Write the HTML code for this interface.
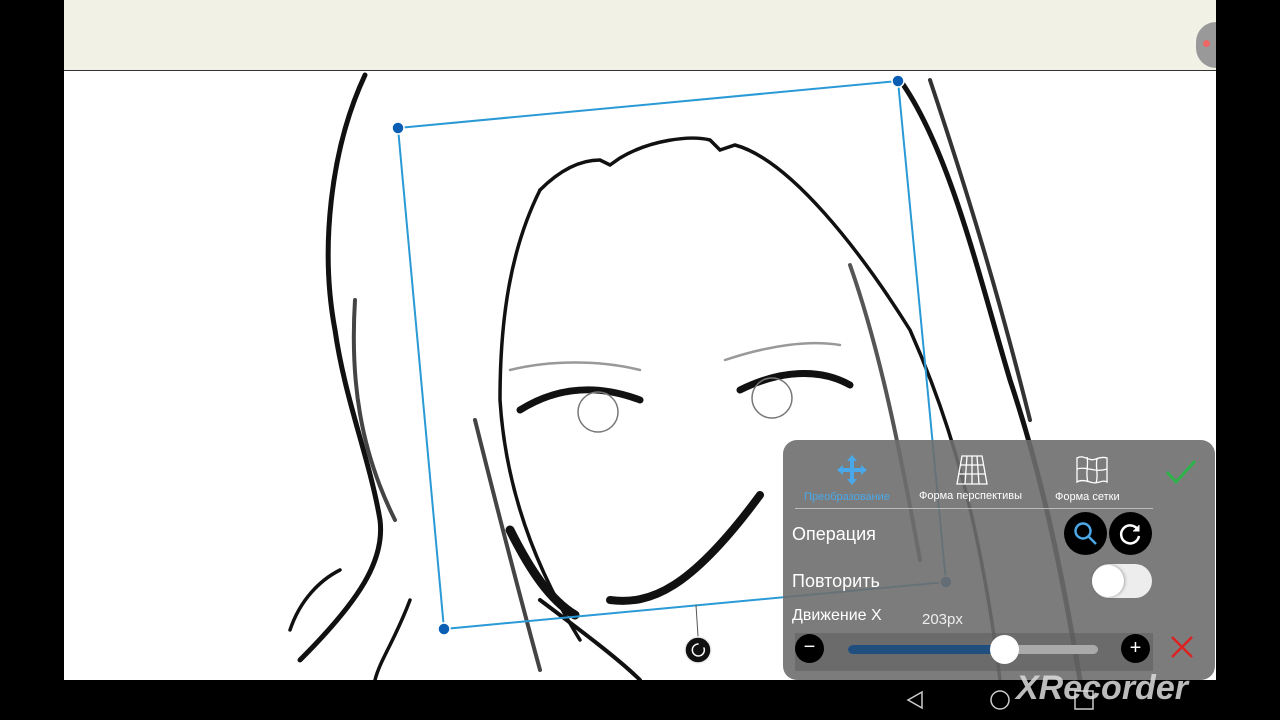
<!DOCTYPE html>
<html><head><meta charset="utf-8"><style>
body{margin:0;width:1280px;height:720px;background:#000;overflow:hidden;position:relative;font-family:"Liberation Sans","Noto Sans CJK SC",sans-serif}
#top{position:absolute;left:64px;top:0;width:1152px;height:70px;background:#f2f1e6;border-bottom:1px solid #333}
#canvas{position:absolute;left:64px;top:71px;width:1152px;height:609px;background:#fff;overflow:hidden}
#panel{position:absolute;left:783px;top:440px;width:432px;height:240px;background:rgba(110,110,110,0.9);border-radius:14px;color:#fff}
.t{position:absolute;white-space:nowrap}
</style></head><body>
<div id="top"><div style="position:absolute;right:0;top:22px;width:20px;height:46px;background:#999;border-radius:23px 0 0 23px"></div><div style="position:absolute;right:6px;top:40px;width:7px;height:7px;border-radius:50%;background:#e66"></div></div>
<div id="canvas">
<svg width="1152" height="609" viewBox="64 71 1152 609" style="position:absolute;left:0;top:0" fill="none" stroke="#111" stroke-linecap="round">
<path d="M365 75 C330 150 320 250 335 330 C345 400 370 460 380 520 C385 560 360 600 300 660" stroke-width="5"/>
<path d="M355 300 C350 380 360 450 395 520" stroke-width="4" stroke="#444"/>
<path d="M900 80 C950 150 980 280 1010 380 C1040 470 1060 560 1080 680" stroke-width="5"/>
<path d="M930 80 C970 200 1000 300 1030 420" stroke-width="4" stroke="#333"/>
<path d="M540 190 C560 170 580 160 600 160 L610 165 L620 158 C650 140 690 135 710 140 L720 150 L735 145 C790 160 860 250 910 330 C950 420 980 520 1000 680" stroke-width="3.5"/>
<path d="M540 190 C510 250 500 320 500 400 C505 480 530 560 580 640" stroke-width="3.5"/>
<path d="M850 265 C880 350 900 450 920 560" stroke-width="4" stroke="#555"/>
<path d="M475 420 C490 480 510 560 540 670" stroke-width="4" stroke="#444"/>
<path d="M520 410 C560 385 600 385 640 400" stroke-width="7"/>
<path d="M740 390 C780 370 820 368 850 385" stroke-width="7"/>
<path d="M510 370 C550 360 600 360 640 370 M725 360 C770 345 810 340 840 345" stroke-width="2.5" stroke="#999"/>
<circle cx="598" cy="412" r="20" stroke-width="1.5" stroke="#777"/>
<circle cx="772" cy="398" r="20" stroke-width="1.5" stroke="#777"/>
<path d="M510 530 C530 570 550 600 575 615" stroke-width="9"/>
<path d="M610 600 C650 605 690 590 760 495" stroke-width="8"/>
<path d="M540 600 C580 630 620 660 640 680" stroke-width="4"/>
<path d="M290 630 C300 600 320 580 340 570 M410 600 C395 640 380 660 375 680" stroke-width="3.5"/>
<g stroke="#2a9ad6" stroke-width="2"><path d="M398 128 L898 81 L946 582 L444 629 Z"/></g>
<g fill="#0a5fb4" stroke="#fff" stroke-width="1.5"><circle cx="398" cy="128" r="6"/><circle cx="898" cy="81" r="6"/><circle cx="946" cy="582" r="6"/><circle cx="444" cy="629" r="6"/></g>
<path d="M696 605 L698 636" stroke="#555" stroke-width="1"/>
<circle cx="698" cy="650" r="13" fill="#111" stroke="#eee" stroke-width="1.5"/>
<path d="M704 648 A6 6 0 1 1 698 644" stroke="#fff" stroke-width="1.5"/>
</svg>
</div>
<div id="panel">
<svg style="position:absolute;left:53px;top:14px" width="32" height="32" viewBox="0 0 32 32" fill="#4aa8e8"><path d="M16 1 L21 7 H18 V14 H25 V11 L31 16 L25 21 V18 H18 V25 H21 L16 31 L11 25 H14 V18 H7 V21 L1 16 L7 11 V14 H14 V7 H11 Z"/></svg>
<svg style="position:absolute;left:173px;top:15px" width="32" height="30" viewBox="0 0 32 30" fill="none" stroke="#fff" stroke-width="1.3"><path d="M6 1 H26 L31 29 H1 Z M11 1 L9 29 M16 1 V29 M21 1 L23 29 M4 10 H28 M3 19 H29"/></svg>
<svg style="position:absolute;left:293px;top:15px" width="32" height="30" viewBox="0 0 32 30" fill="none" stroke="#fff" stroke-width="1.3"><path d="M1 3 C8 -1 12 7 20 4 C25 2 28 2 31 3 V27 C26 24 22 30 14 27 C8 25 4 25 1 27 Z M11 2 C13 10 9 18 12 27 M21 4 C19 12 23 20 20 28 M1 14 C10 11 20 18 31 14"/></svg>
<div class="t" style="left:21px;top:51px;font-size:11px;color:#4aa8e8">Преобразование</div>
<div class="t" style="left:136px;top:50px;font-size:11px">Форма перспективы</div>
<div class="t" style="left:272px;top:51px;font-size:11px">Форма сетки</div>
<svg style="position:absolute;left:382px;top:18px" width="32" height="28" viewBox="0 0 32 28" fill="none" stroke="#2db34a" stroke-width="3"><path d="M2 14 L11 24 L30 3"/></svg>
<div style="position:absolute;left:12px;top:68px;width:358px;height:1px;background:#bbb"></div>
<div class="t" style="left:9px;top:84px;font-size:18px">Операция</div>
<div style="position:absolute;left:281px;top:72px;width:43px;height:43px;border-radius:50%;background:#000"></div>
<svg style="position:absolute;left:290px;top:81px" width="26" height="26" viewBox="0 0 26 26" fill="none" stroke="#4aa8e8" stroke-width="2.5"><circle cx="10" cy="10" r="7.5"/><path d="M15.5 15.5 L23 23"/></svg>
<div style="position:absolute;left:326px;top:72px;width:43px;height:43px;border-radius:50%;background:#000"></div>
<svg style="position:absolute;left:335px;top:81px" width="26" height="26" viewBox="0 0 26 26" fill="none" stroke="#fff" stroke-width="2.5"><path d="M20 9 A9 9 0 1 0 21 15"/><path d="M21 4 V10 H15" fill="#fff" stroke-width="1"/></svg>
<div class="t" style="left:9px;top:131px;font-size:18px">Повторить</div>
<div style="position:absolute;left:309px;top:124px;width:60px;height:34px;border-radius:17px;background:#ededed"></div>
<div style="position:absolute;left:309px;top:125px;width:32px;height:32px;border-radius:50%;background:#fff;box-shadow:1px 0 3px rgba(0,0,0,.3)"></div>
<div class="t" style="left:9px;top:167px;font-size:16px">Движение X</div>
<div class="t" style="left:139px;top:171px;font-size:15px;color:#eee">203px</div>
<div style="position:absolute;left:12px;top:193px;width:358px;height:38px;background:rgba(90,90,90,.5)"></div>
<div style="position:absolute;left:12px;top:194px;width:29px;height:29px;border-radius:50%;background:#000;color:#fff;text-align:center;line-height:27px;font-size:20px">−</div>
<div style="position:absolute;left:65px;top:205px;width:250px;height:9px;border-radius:5px;background:#aaa"></div>
<div style="position:absolute;left:65px;top:205px;width:156px;height:9px;border-radius:5px;background:#1f4e7f"></div>
<div style="position:absolute;left:207px;top:195px;width:29px;height:29px;border-radius:50%;background:#fff"></div>
<div style="position:absolute;left:338px;top:194px;width:29px;height:29px;border-radius:50%;background:#000;color:#fff;text-align:center;line-height:28px;font-size:20px">+</div>
<svg style="position:absolute;left:387px;top:195px" width="24" height="24" viewBox="0 0 24 24" stroke="#d22" stroke-width="2.5"><path d="M2 2 L22 22 M22 2 L2 22"/></svg>
</div>
<svg style="position:absolute;left:900px;top:685px" width="300" height="35" fill="none" stroke="#ccc" stroke-width="1.5"><path d="M22 7 L8 15 L22 23 Z"/><circle cx="100" cy="15" r="9"/><rect x="175" y="6" width="18" height="18"/></svg>
<div class="t" style="left:1016px;top:669px;font-size:34px;font-weight:bold;font-style:italic;color:rgba(220,220,220,.85)">XRecorder</div>
</body></html>
